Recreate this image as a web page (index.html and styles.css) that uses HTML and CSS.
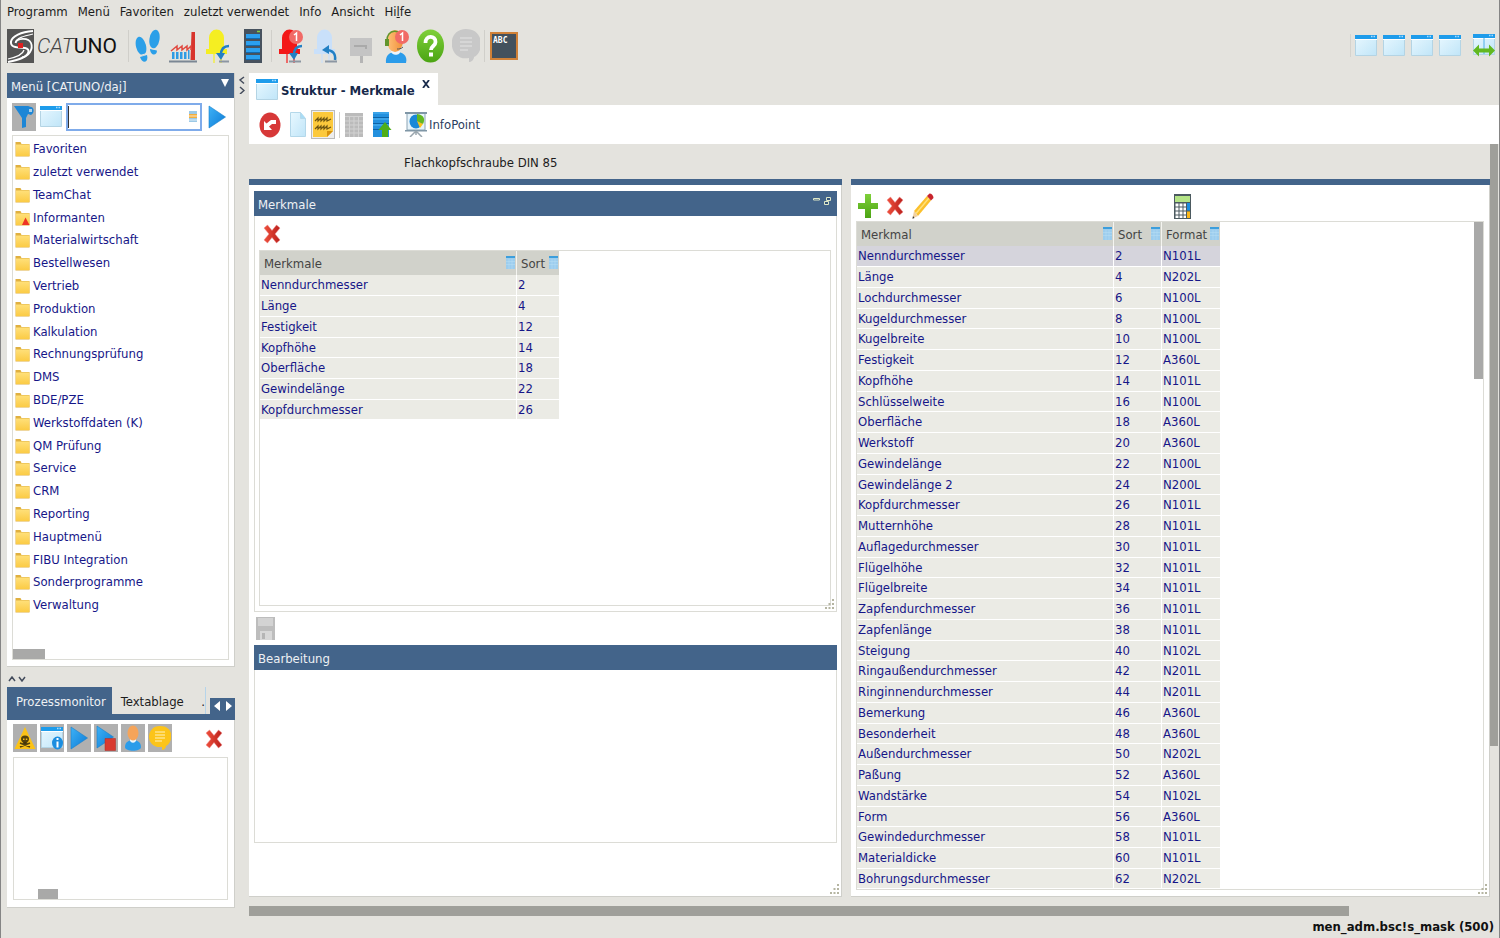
FILE: index.html
```html
<!DOCTYPE html>
<html lang="de">
<head>
<meta charset="utf-8">
<title>CATUNO – Struktur - Merkmale</title>
<link rel="stylesheet" href="styles.css">
</head>
<body>
<svg class="defs" aria-hidden="true">
  <defs>
    <linearGradient id="gBlue" x1="0" y1="0" x2="1" y2="1"><stop offset="0" stop-color="#3fb2f6"/><stop offset="1" stop-color="#0b7ad6"/></linearGradient>
    <linearGradient id="gPale" x1="0" y1="0" x2="1" y2="1"><stop offset="0" stop-color="#e8f8ff"/><stop offset="1" stop-color="#c0e5f8"/></linearGradient>
    <linearGradient id="gFold" x1="0" y1="0" x2="0" y2="1"><stop offset="0" stop-color="#ffe07a"/><stop offset="1" stop-color="#fbcb45"/></linearGradient>
    <linearGradient id="gRed" x1="0" y1="0" x2="1" y2="0"><stop offset="0" stop-color="#f0503c"/><stop offset="1" stop-color="#b9201c"/></linearGradient>
    <linearGradient id="gGreen" x1="0" y1="0" x2="0" y2="1"><stop offset="0" stop-color="#7fd03a"/><stop offset="1" stop-color="#4ba413"/></linearGradient>
    <linearGradient id="gSkin" x1="0" y1="0" x2="1" y2="0"><stop offset="0" stop-color="#ffc078"/><stop offset="1" stop-color="#f09038"/></linearGradient>
  </defs>
  <symbol id="window" viewBox="0 0 22 21"><path d="M.5.5h21v20H.5z" fill="url(#gPale)" stroke="#b4d4e4"/><path d="M0 0h22v4H0z" fill="#1e9ceb"/><path d="M0 4h22v1H0z" fill="#fff"/><path d="M16 1.5h1.5M18.500 1.500h1.500" stroke="#a8dcff" stroke-width="1.500"/></symbol>
  <symbol id="folder" viewBox="0 0 15 16"><path d="M.5 1h5l1 2H14.500V15.500H.5z" fill="#e0b040"/><path d="M1 3.500h13.500V15H1z" fill="url(#gFold)"/></symbol>
  <symbol id="folderwarn" viewBox="0 0 15 16"><path d="M.5 1h5l1 2H14.500V15.500H.5z" fill="#e0b040"/><path d="M1 3.500h13.500V15H1z" fill="url(#gFold)"/><path d="M10.500 7.500 14.500 15H7z" fill="#ee3424"/></symbol>
  <symbol id="cross" viewBox="0 0 18 20"><path d="M1 4 4.500 1 9 6.500 13.500 1 17 4 12 10l5 6-3.500 3L9 13.500 4.500 19 1 16l5-6z" fill="url(#gRed)" stroke="#e88" stroke-width=".5"/></symbol>
  <symbol id="play" viewBox="0 0 18 24"><path d="M1 1 17.500 12 1 23z" fill="url(#gBlue)" stroke="#1a82cc" stroke-width=".6"/></symbol>
  <symbol id="led" viewBox="0 0 28 34"><path d="M8 22h2v12H8zM15 22h2v12h-2z" opacity=".6"/><path d="M4 20V9a7.500 8.500 0 0 1 15 0v11h3v5H1v-5z"/></symbol>
  <symbol id="colmenu" viewBox="0 0 9 13"><path d="M0 0h9v13H0z" fill="#9ccdee"/><path d="M0 0h9v2H0z" fill="#3c9edc"/><path d="M0 5.500h9M0 8.500h9M3 3v10M6 3v10" stroke="#b9def5" stroke-width=".5"/></symbol>
  <symbol id="grip" viewBox="0 0 10 10"><path d="M7 0h2v2H7zM7 4h2v2H7zM3.500 4h2v2h-2zM7 8h2v2H7zM3.500 8h2v2h-2zM0 8h2v2H0z" fill="#b5b5a2"/></symbol>
</svg>

<div class="app">
  <nav class="menubar">
    <a href="#">Programm</a><a href="#">Menü</a><a href="#">Favoriten</a><a href="#">zuletzt verwendet</a><a href="#">Info</a><a href="#">Ansicht</a><a href="#">Hi<u>l</u>fe</a>
  </nav>

  <header class="toolbar">
    <div class="logo">
      <svg width="27" height="34" viewBox="0 0 27 34"><path d="M0 0h27v34H0z" fill="#555"/><path d="M26 2C14 3 5 7 4 12.500 3 19 11 18.500 18 19c6 1 4 7-3 10-4 2-9 3-14 4" fill="none" stroke="#fff" stroke-width="2"/><path d="M26 5C17 7 9 9 8.500 14M1 30c9-2 15-5 16-9" fill="none" stroke="#fff" stroke-width="1.200"/><path d="M8.500 14c1-5 13-6 15.500 0s-2 13-9 14.500" fill="none" stroke="#fff" stroke-width="1.800"/><path d="M11 14h5v5h-5z" fill="#e02020"/></svg>
      <span class="logo-text"><i>CAT</i><b>UNO</b></span>
    </div>
    <span class="sep"></span>
    <button class="tool" aria-label="Schritte"><svg width="26" height="34" viewBox="0 0 26 34"><g fill="#2b9fe8"><ellipse cx="19.500" cy="10" rx="5" ry="9.500" transform="rotate(10 19 10)"/><path d="m15 20 7 1.500c0 6-7 5-7-1.500z"/><ellipse cx="6" cy="17" rx="5" ry="9.500" transform="rotate(-14 6 17)"/><path d="m5 28 7-2c2 8-5 9-7 2z"/></g><path d="m14 19 9 2M3 27l9-2.500" stroke="#e4e3de"/></svg></button>
    <button class="tool" aria-label="Fertigung"><svg width="28" height="34" viewBox="0 0 28 34"><path d="M22.500 3h3.500v28h-4.500z" fill="#d8342c"/><path d="m2 22 6-5v4l5-4v4l5-4v4l4-4v4" fill="none" stroke="#e04a40" stroke-width="1.500"/><path d="M3 23h2.500v7H3zM7 23h2.500v7H7zM11 23h2.500v7H11zM15 23h2.500v7H15zM19 21h1.500v9H19z" fill="#2f9be4"/><path d="M0 31.500h28v2H0z" fill="#7b8794"/></svg></button>
    <button class="tool" aria-label="Status gelb"><svg width="26" height="34" viewBox="0 0 26 34"><use href="#led" width="28" height="34" fill="#f5ee22"/><path d="M14 31.500h10v2H14z" fill="#8c96a2"/><path d="M24 17c-5 0-8 3-8 9" fill="none" stroke="#2280c4" stroke-width="2.500"/><path d="m11 24 5 7 4-7z" fill="#2280c4"/></svg></button>
    <button class="tool" aria-label="Server"><svg width="18" height="34" viewBox="0 0 18 34"><path d="M0 0h18v34H0z" fill="#47525e"/><path d="M2 5h14v4H2zM2 12h14v4H2zM2 19h14v4H2zM2 26h14v4H2z" fill="#2ba0f0"/><path d="M2 9h14v1H2zM2 16h14v1H2zM2 23h14v1H2zM2 30h14v1H2z" fill="#126aae"/><path d="M13 2.500h3" stroke="#8c4" stroke-width="1.500"/></svg></button>
    <span class="sep"></span>
    <button class="tool" aria-label="Status rot"><svg width="26" height="34" viewBox="0 0 26 34"><use href="#led" width="28" height="34" fill="#f31818"/><circle cx="18" cy="8" r="7" fill="#f16a66"/><path d="m16 6 2.500-2v8" fill="none" stroke="#fff" stroke-width="1.500"/><path d="M11 31.500h12v2H11z" fill="#8c96a2"/><path d="M24 17c-5 0-8 3-8 9" fill="none" stroke="#2280c4" stroke-width="2.500"/><path d="m11 24 5 7 4-7z" fill="#2280c4"/></svg></button>
    <button class="tool" aria-label="Status blau"><svg width="26" height="34" viewBox="0 0 26 34"><use href="#led" width="28" height="34" fill="#c9e0fa"/><path d="M12 31.500h12v2H12z" fill="#8c96a2"/><path d="M22 31c1-7-3-10-9-10" fill="none" stroke="#2280c4" stroke-width="2.500"/><path d="m9 21 7-5v9z" fill="#2280c4"/></svg></button>
    <button class="tool" aria-label="Briefkasten"><svg width="24" height="34" viewBox="0 0 24 34"><path d="M1 9h22v18H1z" fill="#c4c4c4"/><path d="M11 27h3v7h-3z" fill="#b5b5b5"/><path d="M5 17h12v3" fill="none" stroke="#aaa" stroke-width="2"/></svg></button>
    <button class="tool" aria-label="Support"><svg width="26" height="34" viewBox="0 0 26 34"><path d="M3 34C2 26 7 23 13 23s12 3 10 11z" fill="#2b9cea"/><path d="M8 22h9c1 5-9 5-9 0z" fill="#eef6fc"/><ellipse cx="12" cy="12" rx="8" ry="11" fill="url(#gSkin)"/><path d="M4 12C3 0 19-2 20 12" fill="none" stroke="#62952c" stroke-width="1.500"/><path d="M2 10h4v7H2z" fill="#62952c"/><circle cx="19" cy="8" r="7" fill="#f16a66"/><path d="m17 6 2.500-2v8" fill="none" stroke="#fff" stroke-width="1.500"/><path d="M20 18c-2 2-4 2-6 2" stroke="#555" fill="none"/></svg></button>
    <button class="tool" aria-label="Hilfe"><svg width="27" height="34" viewBox="0 0 27 34"><ellipse cx="13.500" cy="17" rx="13.500" ry="16.500" fill="url(#gGreen)"/><path d="M8.500 14C8 6 19 6 18.500 13c0 4-4.500 4-4.500 8" fill="none" stroke="#fff" stroke-width="3.800"/><path d="M12 23.500h4v4h-4z" fill="#fff"/></svg></button>
    <button class="tool" aria-label="Chat"><svg width="28" height="34" viewBox="0 0 28 34"><path d="M14 0c19 0 18 24 8 28 0 3-3 5-5 5v-4C-4 33-7 0 14 0z" fill="#c8c8c8"/><path d="M8 9h12M8 13h12M8 17h12M8 21h8" stroke="#dadada" stroke-width="1.500"/></svg></button>
    <span class="sep"></span>
    <button class="tool" aria-label="Tafel"><svg width="28" height="28" viewBox="0 0 28 28"><path d="M1 1h26v26H1z" fill="#43515d" stroke="#d08138" stroke-width="2"/><text class="board" x="3" y="11">ABC</text></svg></button>
    <span class="grow"></span>
    <div class="views">
      <button aria-label="Ansicht 1"><svg width="22" height="21"><use href="#window"/></svg></button>
      <button aria-label="Ansicht 2"><svg width="22" height="21"><use href="#window"/></svg></button>
      <button aria-label="Ansicht 3"><svg width="22" height="21"><use href="#window"/></svg></button>
      <button aria-label="Ansicht 4"><svg width="22" height="21"><use href="#window"/></svg></button>
      <button class="last" aria-label="Ansicht teilen"><svg width="22" height="23" viewBox="0 0 22 23"><use href="#window" width="22" height="21"/><path d="M11 4v16" stroke="#4db0e8"/><path d="m0 16.500 6-6v4h10v-4l6 6-6 6v-4H6v4z" fill="#62b820"/></svg></button>
    </div>
  </header>

  <div class="body">
    <aside class="side">
      <section class="panel menu-panel">
        <h2 class="bar">Menü [CATUNO/daj] <svg class="bar-caret" width="8" height="8"><path d="M0 0h8L4 8z" fill="#fff"/></svg></h2>
        <div class="search">
          <button class="grey" aria-label="Filter"><svg width="22" height="24" viewBox="0 0 22 24"><path d="M1 1h14l3 1c3 0 4 6 0 8l-3-1-2 4v9l-4 1V13z" fill="#1d86d6"/><path d="M16 4h3v3h-3z" fill="#a9cfe9"/></svg></button>
          <button class="win" aria-label="Fenster"><svg width="22" height="21"><use href="#window"/></svg></button>
          <label class="field"><input type="text" aria-label="Suche"><svg width="8" height="11" viewBox="0 0 8 11"><path d="M0 0h8v11H0z" fill="#9cc9e6"/><path d="M0 3h8v4H0z" fill="#f3ae3c"/><path d="M0 5h8M0 9h8" stroke="#fff" stroke-width=".7"/></svg></label>
          <button aria-label="Start"><svg width="18" height="24"><use href="#play"/></svg></button>
        </div>
        <div class="box tree-box">
          <ul class="tree">
            <li><svg><use href="#folder"/></svg><a href="#">Favoriten</a></li>
            <li><svg><use href="#folder"/></svg><a href="#">zuletzt verwendet</a></li>
            <li><svg><use href="#folder"/></svg><a href="#">TeamChat</a></li>
            <li><svg><use href="#folderwarn"/></svg><a href="#">Informanten</a></li>
            <li><svg><use href="#folder"/></svg><a href="#">Materialwirtschaft</a></li>
            <li><svg><use href="#folder"/></svg><a href="#">Bestellwesen</a></li>
            <li><svg><use href="#folder"/></svg><a href="#">Vertrieb</a></li>
            <li><svg><use href="#folder"/></svg><a href="#">Produktion</a></li>
            <li><svg><use href="#folder"/></svg><a href="#">Kalkulation</a></li>
            <li><svg><use href="#folder"/></svg><a href="#">Rechnungsprüfung</a></li>
            <li><svg><use href="#folder"/></svg><a href="#">DMS</a></li>
            <li><svg><use href="#folder"/></svg><a href="#">BDE/PZE</a></li>
            <li><svg><use href="#folder"/></svg><a href="#">Werkstoffdaten (K)</a></li>
            <li><svg><use href="#folder"/></svg><a href="#">QM Prüfung</a></li>
            <li><svg><use href="#folder"/></svg><a href="#">Service</a></li>
            <li><svg><use href="#folder"/></svg><a href="#">CRM</a></li>
            <li><svg><use href="#folder"/></svg><a href="#">Reporting</a></li>
            <li><svg><use href="#folder"/></svg><a href="#">Hauptmenü</a></li>
            <li><svg><use href="#folder"/></svg><a href="#">FIBU Integration</a></li>
            <li><svg><use href="#folder"/></svg><a href="#">Sonderprogramme</a></li>
            <li><svg><use href="#folder"/></svg><a href="#">Verwaltung</a></li>
          </ul>
          <div class="thumb tree-thumb"></div>
        </div>
      </section>
      <div class="hsplit"><svg width="18" height="6" viewBox="0 0 18 6"><path d="m1 5 3-4 3 4M11 1l3 4 3-4" fill="none" stroke="#444c5c" stroke-width="1.500"/></svg></div>
      <section class="monitor">
        <div class="tabs">
          <button class="tab on">Prozessmonitor</button>
          <button class="tab">Textablage</button>
          <span class="more">.</span>
          <button class="nav" aria-label="Tabs blättern"><svg width="18" height="10" viewBox="0 0 18 10"><path d="M6 0v10L0 5zM12 0v10l6-5z" fill="#fff"/></svg></button>
        </div>
        <div class="panel monitor-panel">
          <div class="acts">
            <button class="grey" aria-label="Gefahr"><svg width="22" height="24" viewBox="0 0 22 24"><path d="m11 1 10.500 22H.5z" fill="#fbc216"/><ellipse cx="11" cy="13" rx="4" ry="3.500" fill="#54420c"/><path d="m6 17 10 4M16 17 6 21M9.500 16h3v2h-3z" stroke="#54420c" stroke-width="1.500"/><path d="M9 12.500h1.500v1.500H9zM11.800 12.500h1.500v1.500h-1.500z" fill="#fbc216"/></svg></button>
            <button class="grey" aria-label="Info"><svg width="22" height="24" viewBox="0 0 22 24"><use href="#window" width="22" height="21" y="1"/><ellipse cx="16.500" cy="17" rx="5.500" ry="6.500" fill="#1c8ee0"/><path d="M15.500 15.500h2v6h-2zM15.500 12h2v2h-2z" fill="#fff"/></svg></button>
            <button class="grey" aria-label="Start"><svg width="18" height="24"><use href="#play"/></svg></button>
            <button class="grey" aria-label="Stopp"><svg width="20" height="26" viewBox="0 0 20 26"><use href="#play" width="18" height="24"/><path d="M9 13.500h10.500V25.500H9z" fill="#d83a30" stroke="#b02820" stroke-width=".5"/></svg></button>
            <button class="grey" aria-label="Benutzer"><svg width="18" height="26" viewBox="0 0 18 26"><path d="M1 22c0-5 4-7 8-7s8 2 8 7-16 5-16 0z" fill="#2b9cea"/><path d="M6 14h6c1 5-7 5-6 0z" fill="#eef6fc"/><ellipse cx="9" cy="8" rx="5.500" ry="7.500" fill="#f5a45a"/></svg></button>
            <button class="grey" aria-label="Meldung"><svg width="22" height="26" viewBox="0 0 22 26"><path d="M11 1c15 0 13 17 6 20 0 2-2 4-4 4v-3C-4 24-4 1 11 1z" fill="#fcc419"/><path d="M6 7h10M6 10h10M6 13h10M6 16h7" stroke="#fff2c0"/></svg></button>
            <span class="grow"></span>
            <button class="del" aria-label="Löschen"><svg width="18" height="20"><use href="#cross"/></svg></button>
          </div>
          <div class="box monitor-box"><div class="thumb monitor-thumb"></div></div>
        </div>
      </section>
    </aside>

    <div class="vsplit"><svg width="6" height="18" viewBox="0 0 6 18"><path d="M5 1 1 4l4 3.500M1 11l4 3.500L1 18" fill="none" stroke="#444c5c" stroke-width="1.500"/></svg></div>

    <main class="main">
      <div class="doctab">
        <svg width="22" height="21"><use href="#window"/></svg><strong>Struktur - Merkmale</strong>
        <button aria-label="Schließen"><svg width="8" height="8" viewBox="0 0 8 8"><path d="m1 0 6 8M7 0 1 8" stroke="#1a2c4c" stroke-width="1.800"/></svg></button>
      </div>
      <div class="doctools">
        <button aria-label="Zurück"><svg width="22" height="26" viewBox="0 0 22 26"><ellipse cx="11" cy="13" rx="10.500" ry="12.500" fill="#d73838"/><path d="M5 18V9l2.500 2.500L12 8h5v4h-4l-3 2.500L13 18z" fill="#fff"/></svg></button>
        <button class="doc" aria-label="Neu"><svg width="16" height="25" viewBox="0 0 16 25"><path d="M.5.5h10l5 6v18H.5z" fill="url(#gPale)" stroke="#b4d8ea"/><path d="M10.500.5v6h5" fill="#a9dcf5" stroke="#b4d8ea"/></svg></button>
        <button class="note" aria-label="Notiz"><svg width="20" height="25" viewBox="0 0 20 25"><path d="M0 0h20v19l-6 6H0z" fill="#fcc93c"/><path d="M20 19h-6v6z" fill="#d8920c"/><path d="m2 9 3-3v3l3-3v3l3-3v3l3-3v3l4-2M2 17l3-3v3l3-3v3l3-3v3l3-3v3l4-2" fill="none" stroke="#6d5512" stroke-width="1.200"/></svg></button>
        <span class="sep"></span>
        <button aria-label="Raster"><svg width="18" height="24" viewBox="0 0 18 24"><path d="M0 0h18v24H0z" fill="#bbb"/><path d="M0 3.500h18M0 8h18M0 12h18M0 16h18M0 20h18M4.500 3v21M9 3v21M13.500 3v21" stroke="#d2d2d2"/></svg></button>
        <button class="up" aria-label="Laden"><svg width="19" height="25" viewBox="0 0 19 25"><path d="M0 0h16v25H0z" fill="#2390de"/><path d="M0 5.500h16M0 11.500h16M0 17.500h16" stroke="#0d62a6" stroke-width="1"/><path d="M0 1h16M0 7h16M0 13h16" stroke="#55b8f4"/><path d="m12 10 6.500 8H15v7H9v-7H5.500z" fill="#4fae18"/></svg></button>
        <button class="info"><svg width="22" height="25" viewBox="0 0 22 25"><path d="M2 1h18v17H2z" fill="#e6f3fa" stroke="#8ba4b4"/><path d="M0 0h22v2H0zM0 18h22v1.500H0z" fill="#7f96a6"/><ellipse cx="11" cy="9.500" rx="6.500" ry="7" fill="#1a88d8"/><path d="M12 9V2c8 1 8 6 6 10z" fill="#62b820"/><path d="m12 9 6 3-3 4z" fill="#fcc419"/><path d="m11 19-6 6M11 19l6 6M11 19v4" stroke="#9aa6ae" stroke-width="1.500"/></svg>InfoPoint</button>
      </div>

      <div class="workarea">
        <div class="sheet">
          <p class="title">Flachkopfschraube DIN 85</p>
          <div class="cols">
            <section class="card left">
              <div class="inner">
                <h2 class="bar">Merkmale <svg class="winctl" width="19" height="9" viewBox="0 0 19 9"><path d="M.5 1.500h6v1.500h-6zM13.500.5h4v3h-4zM11.500 4.500h4v3h-4z" fill="#35557a" stroke="#dfe8c8"/></svg></h2>
                <button class="rowdel" aria-label="Merkmal löschen"><svg width="18" height="20"><use href="#cross"/></svg></button>
                <div class="box grid-box">
                  <table class="grid small">
                    <thead><tr><th><span>Merkmale<svg><use href="#colmenu"/></svg></span></th><th><span>Sort<svg><use href="#colmenu"/></svg></span></th></tr></thead>
                    <tbody>
                      <tr><td>Nenndurchmesser</td><td>2</td></tr>
                      <tr><td>Länge</td><td>4</td></tr>
                      <tr><td>Festigkeit</td><td>12</td></tr>
                      <tr><td>Kopfhöhe</td><td>14</td></tr>
                      <tr><td>Oberfläche</td><td>18</td></tr>
                      <tr><td>Gewindelänge</td><td>22</td></tr>
                      <tr><td>Kopfdurchmesser</td><td>26</td></tr>
                    </tbody>
                  </table>
                </div>
                <svg class="grip" width="10" height="10"><use href="#grip"/></svg>
              </div>
              <button class="save" aria-label="Speichern"><svg width="19" height="23" viewBox="0 0 19 23"><path d="M0 0h19v23H0z" fill="#bdbdbd"/><path d="M2 1h15v8H2z" fill="#d3d3d3"/><path d="M4 14h12v9H4z" fill="#d8d8d8"/><path d="M6 16h3v6H6z" fill="#b5b5b5"/></svg></button>
              <div class="inner edit"><h2 class="bar">Bearbeitung</h2></div>
              <svg class="grip" width="10" height="10"><use href="#grip"/></svg>
            </section>

            <section class="card right">
              <div class="cardtools">
                <button aria-label="Hinzufügen"><svg width="20" height="24" viewBox="0 0 20 24"><path d="M7 0h6v9h7v6h-7v9H7v-9H0V9h7z" fill="url(#gGreen)"/></svg></button>
                <button aria-label="Löschen"><svg width="18" height="20"><use href="#cross"/></svg></button>
                <button aria-label="Bearbeiten"><svg width="22" height="26" viewBox="0 0 22 26"><path d="M2 18 15 3l4 4.500L6 23z" fill="#fbc02c"/><path d="M4 20.500 17 5" stroke="#ffe07a" stroke-width="1.500"/><path d="m2 18 4 5-5.500 2.500z" fill="#f0d0a0"/><path d="m1 23 1.500 2-2 .8z" fill="#333"/><path d="m15 3 2.500-2.500c2 0 4 2 4 4.500L19 7.500z" fill="#c8242c"/></svg></button>
                <button class="calc" aria-label="Rechner"><svg width="17" height="25" viewBox="0 0 17 25"><path d="M0 0h17v25H0z" fill="#4c5a60"/><path d="M1 2h15v6H1z" fill="#b4e486"/><path d="M1.500 9.500h3v3h-3zM5.500 9.500h3v3h-3zM9.500 9.500h2.500v3H9.500zM1.500 13.500h3v3h-3zM5.500 13.500h3v3h-3zM9.500 13.500h2.500v3H9.500zM1.500 17.500h3v3h-3zM5.500 17.500h3v3h-3zM9.500 17.500h2.500v3H9.500zM1.500 21.500h3v2.500h-3zM5.500 21.500h3v2.500h-3zM9.500 21.500h2.500v2.500H9.500z" fill="#fff"/><path d="M13 9h3v7.500h-3z" fill="#1c8ee0"/><path d="M13 17.500h3V24h-3z" fill="#fcb819"/></svg></button>
              </div>
              <div class="box grid-box">
                <table class="grid big">
                  <thead><tr><th><span>Merkmal<svg><use href="#colmenu"/></svg></span></th><th><span>Sort<svg><use href="#colmenu"/></svg></span></th><th><span>Format<svg><use href="#colmenu"/></svg></span></th></tr></thead>
                  <tbody>
                    <tr class="selected"><td>Nenndurchmesser</td><td>2</td><td>N101L</td></tr>
                    <tr><td>Länge</td><td>4</td><td>N202L</td></tr>
                    <tr><td>Lochdurchmesser</td><td>6</td><td>N100L</td></tr>
                    <tr><td>Kugeldurchmesser</td><td>8</td><td>N100L</td></tr>
                    <tr><td>Kugelbreite</td><td>10</td><td>N100L</td></tr>
                    <tr><td>Festigkeit</td><td>12</td><td>A360L</td></tr>
                    <tr><td>Kopfhöhe</td><td>14</td><td>N101L</td></tr>
                    <tr><td>Schlüsselweite</td><td>16</td><td>N100L</td></tr>
                    <tr><td>Oberfläche</td><td>18</td><td>A360L</td></tr>
                    <tr><td>Werkstoff</td><td>20</td><td>A360L</td></tr>
                    <tr><td>Gewindelänge</td><td>22</td><td>N100L</td></tr>
                    <tr><td>Gewindelänge 2</td><td>24</td><td>N200L</td></tr>
                    <tr><td>Kopfdurchmesser</td><td>26</td><td>N101L</td></tr>
                    <tr><td>Mutternhöhe</td><td>28</td><td>N101L</td></tr>
                    <tr><td>Auflagedurchmesser</td><td>30</td><td>N101L</td></tr>
                    <tr><td>Flügelhöhe</td><td>32</td><td>N101L</td></tr>
                    <tr><td>Flügelbreite</td><td>34</td><td>N101L</td></tr>
                    <tr><td>Zapfendurchmesser</td><td>36</td><td>N101L</td></tr>
                    <tr><td>Zapfenlänge</td><td>38</td><td>N101L</td></tr>
                    <tr><td>Steigung</td><td>40</td><td>N102L</td></tr>
                    <tr><td>Ringaußendurchmesser</td><td>42</td><td>N201L</td></tr>
                    <tr><td>Ringinnendurchmesser</td><td>44</td><td>N201L</td></tr>
                    <tr><td>Bemerkung</td><td>46</td><td>A360L</td></tr>
                    <tr><td>Besonderheit</td><td>48</td><td>A360L</td></tr>
                    <tr><td>Außendurchmesser</td><td>50</td><td>N202L</td></tr>
                    <tr><td>Paßung</td><td>52</td><td>A360L</td></tr>
                    <tr><td>Wandstärke</td><td>54</td><td>N102L</td></tr>
                    <tr><td>Form</td><td>56</td><td>A360L</td></tr>
                    <tr><td>Gewindedurchmesser</td><td>58</td><td>N101L</td></tr>
                    <tr><td>Materialdicke</td><td>60</td><td>N101L</td></tr>
                    <tr><td>Bohrungsdurchmesser</td><td>62</td><td>N202L</td></tr>
                  </tbody>
                </table>
                <div class="thumb grid-thumb"></div>
              </div>
              <svg class="grip" width="10" height="10"><use href="#grip"/></svg>
            </section>
          </div>
        </div>
        <div class="vtrack"><div class="vbar"></div></div>
      </div>
      <div class="htrack"><div class="hbar"></div></div>
    </main>
  </div>

  <footer class="status">men_adm.bsc!s_mask (500)</footer>
</div>
</body>
</html>
```
FILE: styles.css
```css
:root {
  --bg: #e4e3de;
  --blue: #43648a;
  --navy: #161688;
  --line: #dcdcd6;
}
* { box-sizing: border-box; }
body {
  margin: 0;
  background: var(--bg);
  color: #1c1c1c;
  font: 13px/16px "DejaVu Sans Condensed", "Noto Sans", sans-serif;
}
.defs { position: absolute; width: 0; height: 0; }
button {
  display: inline-flex;
  align-items: center;
  justify-content: center;
  flex: none;
  margin: 0;
  padding: 0;
  border: 0;
  background: none;
  color: inherit;
  font: inherit;
}
svg { display: block; flex: none; }
a { color: inherit; text-decoration: none; }
.grow { flex: 1; }
.app {
  display: flex;
  flex-direction: column;
  min-height: 100vh;
  border: 1px solid #858585;
  border-top: 0;
}

.menubar { display: flex; gap: 10px; height: 24px; padding: 4px 6px; white-space: nowrap; }

.toolbar { display: flex; align-items: center; height: 43px; padding-left: 6px; }
.logo { display: flex; align-items: center; gap: 3px; width: 120px; }
.logo-text { font: 400 21px/34px Roboto, sans-serif; color: #444; }
.logo-text i { font-weight: 300; }
.logo-text b { font-weight: 400; color: #111; }
.sep { width: 1px; height: 32px; margin: 0 1px; background: #d0cfca; }
.tool { width: 35px; height: 34px; }
.board { fill: #fff; font: bold 8px "DejaVu Sans Mono", monospace; }
.views { display: flex; gap: 6px; padding: 0 4px 0 4px; border-left: 1px solid #d4d3ce; }
.views .last { margin-left: 6px; }

.body { flex: 1; display: flex; margin-top: 6px; }
.side { width: 228px; margin-left: 6px; flex: none; display: flex; flex-direction: column; }
.panel { display: flex; flex-direction: column; background: #fff; border: solid #cfcfca; border-width: 0 1px 1px 0; }
.menu-panel { flex: 1; padding-bottom: 6px; }
.bar {
  display: flex;
  justify-content: space-between;
  margin: 0;
  height: 25px;
  padding: 6px 5px 3px 4px;
  background: var(--blue);
  color: #eef1f4;
  font-size: 13px;
  font-weight: 400;
}
.search { display: flex; align-items: center; height: 37px; padding: 0 8px 0 5px; }
.grey { width: 24px; height: 28px; background: #b0b0b0; }
.win { margin: 0 4px; }
.field { display: flex; align-items: center; flex: 1; min-width: 0; height: 28px; margin-right: 6px; padding-right: 3px; border: 2px solid #7fabea; }
.field input { flex: 1; min-width: 0; height: 22px; border: 0; padding: 0; outline: 0; border-left: 1px solid #333; font: inherit; }
.box { border: 1px solid var(--line); background: #fff; }
.tree-box { flex: 1; margin: 0 5px; display: flex; flex-direction: column; justify-content: space-between; }
.tree { margin: 0; padding: 1px 0 0 2px; list-style: none; color: var(--navy); }
.tree li { display: flex; align-items: center; gap: 3px; height: 23px; }
.tree li:nth-child(5n) { height: 22px; }
.tree svg { width: 15px; height: 16px; }
.thumb { background: #a9a9a8; }
.tree-thumb { width: 32px; height: 10px; }
.hsplit { height: 20px; padding: 9px 0 0 1px; }

.tabs { display: flex; height: 33px; border-bottom: 6px solid var(--blue); }
.tab { padding: 3px 9px 0; height: 27px; }
.tab.on { padding-right: 6px; background: var(--blue); color: #eef1f4; }
.more { flex: 1; padding-top: 7px; text-align: right; border-right: 1px solid #b5d4ea; margin-right: 4px; }
.nav { width: 25px; height: 16px; align-self: flex-end; background: var(--blue); }
.monitor-panel { height: 188px; padding: 4px 6px 7px; }
.acts { display: flex; gap: 3px; height: 33px; align-items: flex-start; }
.del { height: 29px; margin-right: 5px; }
.monitor-box { flex: 1; display: flex; align-items: flex-end; }
.monitor-thumb { width: 20px; height: 10px; margin-left: 24px; }

.vsplit { width: 14px; flex: none; padding: 3px 0 0 4px; }
.main { flex: 1; min-width: 0; display: flex; flex-direction: column; }
.doctab { display: flex; align-items: center; align-self: flex-start; height: 32px; padding: 0 8px 0 7px; background: #fff; color: #16294a; }
.doctab strong { margin: 3px 7px 0 3px; }
.doctab button { align-self: flex-start; margin-top: 7px; }
.doctools { display: flex; align-items: center; height: 39px; padding-left: 10px; background: #fff; }
.doc { margin: 0 5px 0 9px; }
.note { padding: 1px; border: 1px solid #bbb; background: #eee; }
.doctools .sep { height: 26px; margin: 0 5px 0 4px; }
.up { margin: 0 13px 0 10px; }
.info { gap: 2px; color: #2c405e; }

.workarea { flex: 1; display: flex; }
.sheet { flex: 1; min-width: 0; display: flex; flex-direction: column; }
.title { margin: 0; padding: 11px 0 8px 155px; height: 35px; }
.cols { flex: 1; display: grid; grid-template-columns: 593fr 639fr; gap: 9px; }
.card { position: relative; display: flex; flex-direction: column; min-width: 0; background: #fff; border: solid #cfcfca; border-width: 0 1px 1px 0; }
.card::before { content: ""; height: 6px; margin-right: -1px; background: var(--blue); }
.left > .inner, .left > .save { margin-left: 5px; margin-right: 4px; }
.left { padding-bottom: 53px; }
.inner { position: relative; flex: 421; display: flex; flex-direction: column; border: 1px solid var(--line); }
.left::before { margin-bottom: 6px; }
.inner .bar { margin: -1px -1px 0; }
.edit { flex: 197; }
.rowdel { align-self: flex-start; height: 34px; padding: 2px 0 0 8px; }
.grid-box { position: relative; flex: 1 0 auto; margin: 0 5px 5px 4px; }
.save { align-self: flex-start; height: 33px; padding: 0 0 0 2px; }
.grip { position: absolute; right: 1px; bottom: 2px; }
.cardtools { display: flex; align-items: center; gap: 8px; height: 36px; padding: 6px 7px 0; }
.calc { margin-left: 232px; }
.right .grid-box { margin: 0 5px 6px; }
.grid-thumb { position: absolute; top: 0; right: 0; width: 9px; height: 157px; }

.grid { border-collapse: separate; border-spacing: 0; table-layout: fixed; color: var(--navy); }
.small { width: 299px; }
.big { width: 363px; }
.grid th { height: 24px; padding: 0 1px 0 4px; background: #d1d2cb; color: #444; font-weight: 400; border-right: 1px solid #f4f4f0; }
.grid th span { display: flex; align-items: center; justify-content: space-between; padding-top: 2px; }
.grid th svg { width: 9px; height: 13px; margin-top: -3px; }
.grid th:nth-child(1) { width: 257px; }
.big th:nth-child(2) { width: 48px; }
.grid tr > :last-child { border-right: 0; }
.grid tbody tr { height: 21px; }
.grid tbody tr:nth-child(4n), .grid tbody tr:last-child { height: 20px; }
.grid td { padding: 0 1px; background: #ebebe5; border-right: 1px solid #fff; border-bottom: 1px solid #fff; }
.grid .selected td { background: #d5d4dc; }

.vtrack { width: 9px; flex: none; }
.vbar { width: 8px; height: 80%; background: #9f9f9a; }
.htrack { height: 20px; padding-top: 9px; }
.hbar { width: 88%; height: 10px; background: #9f9f9a; }
.side { padding-bottom: 9px; }

.status { height: 22px; padding: 2px 5px 0 0; text-align: right; font-weight: 700; color: #111; }
```
